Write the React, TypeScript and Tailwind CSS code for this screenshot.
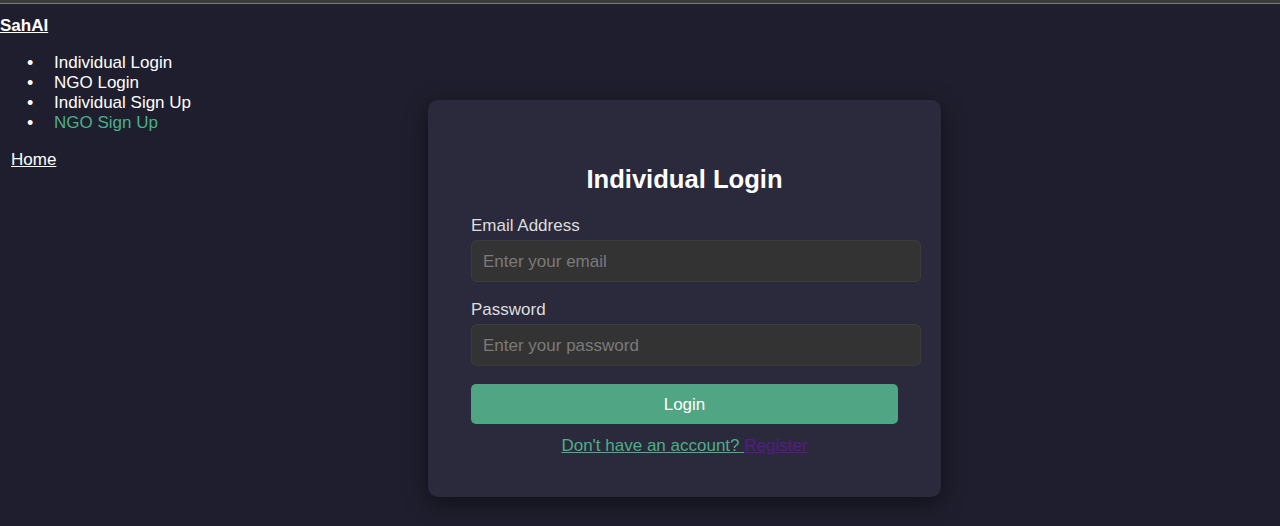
const navItems = [
	{ label: 'Individual Login', active: false },
	{ label: 'NGO Login', active: false },
	{ label: 'Individual Sign Up', active: false },
	{ label: 'NGO Sign Up', active: true },
];

const App = () => {
	return (
		<div className="min-h-screen bg-[#1e1e2e] font-['Liberation_Sans',Arial,sans-serif] text-white">
			<div className="h-[3px] bg-[#3b3b3b]" />
			<div className="h-px bg-[#7a7a7a]" />

			<div className="flex">
				{/* side nav */}
				<nav className="w-[89px] shrink-0 whitespace-nowrap pt-[12px] text-[17px] leading-[20px]">
					<a href="#" className="font-bold text-white underline">
						SahAI
					</a>
					<ul className="mt-[17px] pl-[27px]">
						{navItems.map((item) => (
							<li key={item.label} className="flex">
								<span className="w-[27px] shrink-0 text-[18px]">•</span>
								<span className={item.active ? 'text-[#4caf88]' : 'text-white'}>{item.label}</span>
							</li>
						))}
					</ul>
					<a href="#" className="mt-[17px] ml-[11px] inline-block text-white underline">
						Home
					</a>
				</nav>

				{/* login card */}
				<main className="flex flex-1 justify-center pt-[96px]">
					<div className="w-[513px] rounded-[10px] bg-[#2a2a3c] px-[43px] pt-[65px] pb-[41px] shadow-[0_6px_24px_rgba(0,0,0,0.45)]">
						<h2 className="text-center text-[25.6px] font-bold leading-[29px] text-white">Individual Login</h2>

						<form className="mt-[22px] flex flex-col">
							<label htmlFor="email" className="text-[17px] leading-[20px] text-[#dddddd]">
								Email Address
							</label>
							<input
								id="email"
								type="email"
								placeholder="Enter your email"
								className="mt-[4px] h-[42px] w-[450px] rounded-[6px] border border-[#3c3c3c] bg-[#333333] px-[11px] pt-[2px] text-[17px] text-white outline-none placeholder:text-[#7a7a7a]"
							/>

							<label htmlFor="password" className="mt-[18px] text-[17px] leading-[20px] text-[#dddddd]">
								Password
							</label>
							<input
								id="password"
								type="password"
								placeholder="Enter your password"
								className="mt-[4px] h-[42px] w-[450px] rounded-[6px] border border-[#3c3c3c] bg-[#333333] px-[11px] pt-[2px] text-[17px] text-white outline-none placeholder:text-[#7a7a7a]"
							/>

							<button
								type="submit"
								className="mt-[18px] h-[40px] w-full rounded-[5px] bg-[#4fa584] pt-[2px] text-[17px] text-white"
							>
								Login
							</button>
						</form>

						<p className="mt-[12px] text-center text-[17px] leading-[20px]">
							<a href="#" className="text-[#4caf88] underline">
								Don't have an account?{' '}
							</a>
							<a href="#" className="text-[#551a8b] underline">
								Register
							</a>
						</p>
					</div>
				</main>
			</div>
		</div>
	);
};

export default App;
